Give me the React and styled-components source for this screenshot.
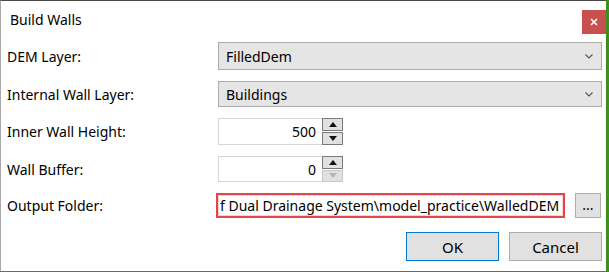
import React from "react";
import styled, { createGlobalStyle } from "styled-components";

const GlobalStyle = createGlobalStyle`
  html, body {
    margin: 0;
    padding: 0;
    background: #3f8f1c;
  }
  body {
    font-family: "Noto Sans", "Open Sans", sans-serif;
    font-size: 14px;
    color: #000;
  }
`;

const Window = styled.div`
  width: 606px;
  height: 271px;
  background: #fff;
  border-top: 1px solid #4a4a44;
  border-left: 1px solid #a8a8a8;
  box-sizing: border-box;
  display: flex;
  flex-direction: column;
  overflow: hidden;
`;

const TitleBar = styled.div`
  height: 37px;
  display: flex;
  align-items: center;
  justify-content: space-between;
  padding-left: 9px;
  flex-shrink: 0;
`;

const Title = styled.span`
  font-size: 14px;
`;

const CloseButton = styled.button`
  width: 24px;
  height: 24px;
  margin-top: 9px;
  align-self: flex-start;
  background: #c75050;
  border: none;
  padding: 0;
  display: flex;
  align-items: center;
  justify-content: center;
`;

const Form = styled.div`
  display: grid;
  grid-template-columns: 212px 384px;
  grid-template-rows: 28px 26px 27px 26px 25px;
  row-gap: 11px;
  padding: 4px 0 0 5px;
`;

const Label = styled.div`
  display: flex;
  align-items: center;
  padding-left: 1px;
`;

const Combo = styled.div`
  background: #e5e5e5;
  border: 1px solid #acacac;
  display: flex;
  align-items: center;
  justify-content: space-between;
  padding: 0 8px 0 7px;
  box-sizing: border-box;
`;

const NumRow = styled.div`
  display: flex;
`;

const NumBox = styled.div`
  width: 104px;
  border: 1px solid #d4d6da;
  border-right: none;
  display: flex;
  align-items: center;
  justify-content: flex-end;
  padding-right: 6px;
  box-sizing: border-box;
`;

const Spinner = styled.div`
  width: 21px;
  display: flex;
  flex-direction: column;
  gap: 1px;
`;

const SpinButton = styled.div`
  flex: 1;
  background: #e1e1e1;
  border: 1px solid ${(p) => (p.disabled ? "#c8c8c8" : "#7a7a7a")};
  box-sizing: border-box;
  display: flex;
  align-items: center;
  justify-content: center;
`;

const FolderRow = styled.div`
  display: flex;
  margin-left: -2px;
`;

const PathBox = styled.div`
  width: 349px;
  border: 2px solid #e8434a;
  outline: 1px solid #f6d3d5;
  outline-offset: -3px;
  display: flex;
  align-items: center;
  padding-left: 2px;
  box-sizing: border-box;
  white-space: nowrap;
  overflow: hidden;
`;

const BrowseButton = styled.div`
  width: 26px;
  height: 25px;
  margin-left: 10px;
  background: #e1e1e1;
  border: 1px solid #adadad;
  box-sizing: border-box;
  display: flex;
  align-items: center;
  justify-content: center;
  font-size: 14px;
  line-height: 1;
  padding-bottom: 1px;
`;

const Footer = styled.div`
  display: flex;
  justify-content: flex-end;
  gap: 10px;
  padding: 14px 4px 0 0;
`;

const DialogButton = styled.button`
  width: 93px;
  height: 29px;
  background: #e1e1e1;
  border: 1px solid ${(p) => (p.primary ? "#0078d7" : "#adadad")};
  font-family: inherit;
  font-size: 15px;
  color: #000;
  padding: 0;
`;

const Chevron = () => (
  <svg width="8" height="5" viewBox="0 0 8 5">
    <path d="M0.5 0.5 L4 4 L7.5 0.5" fill="none" stroke="#555" strokeWidth="1.1" />
  </svg>
);

const Arrow = ({ down, color }) => (
  <svg width="8" height="5" viewBox="0 0 8 5">
    <path d={down ? "M0 0 H8 L4 5 Z" : "M0 5 H8 L4 0 Z"} fill={color} />
  </svg>
);

const NumberInput = ({ value, downDisabled }) => (
  <NumRow>
    <NumBox>{value}</NumBox>
    <Spinner>
      <SpinButton>
        <Arrow color="#111" />
      </SpinButton>
      <SpinButton disabled={downDisabled}>
        <Arrow down color={downDisabled ? "#b5b5b5" : "#111"} />
      </SpinButton>
    </Spinner>
  </NumRow>
);

export default function App() {
  return (
    <>
      <GlobalStyle />
      <Window>
        <TitleBar>
          <Title>Build Walls</Title>
          <CloseButton>
            <svg width="8" height="8" viewBox="0 0 8 8">
              <path d="M1 1 L7 7 M7 1 L1 7" stroke="#fff" strokeWidth="1.6" />
            </svg>
          </CloseButton>
        </TitleBar>
        <Form>
          <Label>DEM Layer:</Label>
          <Combo>
            FilledDem
            <Chevron />
          </Combo>
          <Label>Internal Wall Layer:</Label>
          <Combo>
            Buildings
            <Chevron />
          </Combo>
          <Label>Inner Wall Height:</Label>
          <NumberInput value="500" />
          <Label>Wall Buffer:</Label>
          <NumberInput value="0" downDisabled />
          <Label>Output Folder:</Label>
          <FolderRow>
            <PathBox>f Dual Drainage System\model_practice\WalledDEM</PathBox>
            <BrowseButton>...</BrowseButton>
          </FolderRow>
        </Form>
        <Footer>
          <DialogButton primary>OK</DialogButton>
          <DialogButton>Cancel</DialogButton>
        </Footer>
      </Window>
    </>
  );
}
